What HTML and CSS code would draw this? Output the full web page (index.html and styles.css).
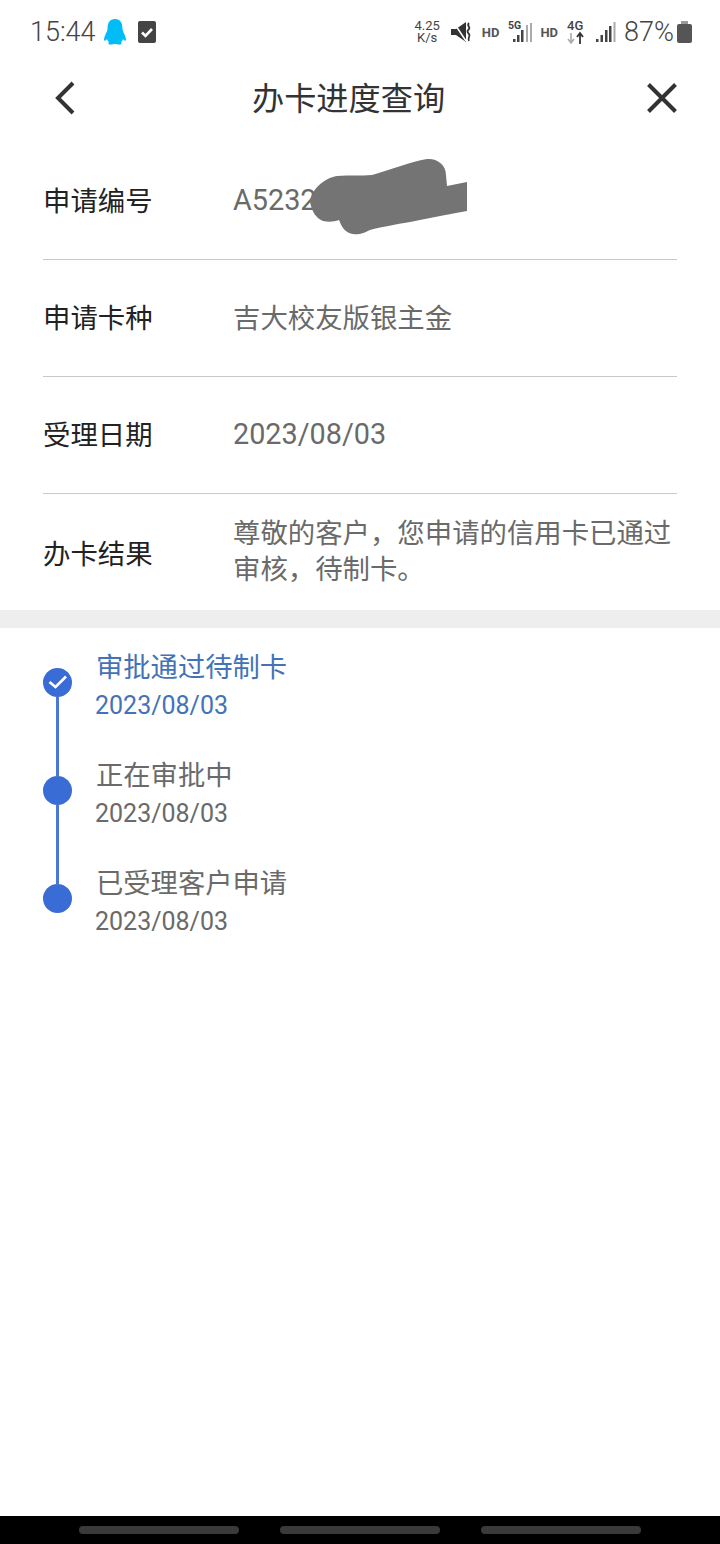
FILE: index.html
```html
<!DOCTYPE html>
<html lang="zh-CN">
<head>
    <meta charset="UTF-8">
    <meta name="viewport" content="width=device-width, initial-scale=1.0">
    <title>办卡进度查询</title>
    <link rel="stylesheet" href="styles.css">
</head>
<body>
    <div class="page">
        <div class="status-bar">
            <div class="status-left">
                <span class="clock">15:44</span>
                <svg class="qq-icon" width="24" height="28" viewBox="0 0 24 28">
                    <path fill="#00bdf7" d="M12 1C6.800 1 4.600 5 4.600 9.500c0 1.400-.1 2.500-.6 3.700C2.800 15.700 1 18.800 1 22c.5 1.500 2 .5 3-1 .3 1.300 1 2.400 2 3.300C5 25 5 26.500 7.500 26.500c1.900 0 3.300-.6 4.500-.6s2.600.6 4.500.6c2.500 0 2.500-1.500 1.500-2.200 1-.9 1.700-2 2-3.300 1 1.500 2.500 2.500 3 1 0-3.200-1.800-6.300-3-8.800-.5-1.200-.6-2.300-.6-3.700C19.400 5 17.200 1 12 1z"/>
                </svg>
                <svg class="task-icon" width="18" height="22" viewBox="0 0 18 22">
                    <rect width="18" height="22" rx="2" fill="#444"/>
                    <path d="M4 11.500l3.500 3.500 6.500-7" fill="none" stroke="#fff" stroke-width="2.600"/>
                </svg>
            </div>
            <div class="status-right">
                <span class="speed">4.25<br>K/s</span>
                <svg class="mute-icon" width="21" height="22" viewBox="0 0 21 22">
                    <path fill="#333" d="M0 8h5L15 1v20L5 14H0z"/>
                    <path d="M3 2l12 18" stroke="#fff" stroke-width="1.500"/>
                    <path d="M18 2c-3 3 2 4 0 6s-2 3 0 5-2 4 0 7" fill="none" stroke="#333" stroke-width="1.800"/>
                </svg>
                <span class="hd hd-first">HD</span>
                <svg class="signal-icon" width="25" height="24" viewBox="0 0 25 24">
                    <text x="0" y="9" class="net-label">5G</text>
                    <rect x="5" y="19" width="2.500" height="3" fill="#444"/>
                    <rect x="9" y="15" width="2.500" height="7" fill="#444"/>
                    <rect x="13" y="10" width="2.500" height="12" fill="#444"/>
                    <rect x="18" y="5" width="2" height="17" fill="#aaa"/>
                    <rect x="22" y="3" width="2" height="19" fill="#aaa"/>
                </svg>
                <span class="hd hd-second">HD</span>
                <svg class="net-icon" width="19" height="26" viewBox="0 0 19 26">
                    <text x="0" y="11" class="net-label net-label-big">4G</text>
                    <path d="M4 14v10M1 20l3 4 3-4" fill="none" stroke="#aaa" stroke-width="1.600"/>
                    <path d="M13 25V15M10 18l3-4 3 4" fill="none" stroke="#333" stroke-width="1.800"/>
                </svg>
                <svg class="bars-icon" width="20" height="22" viewBox="0 0 20 22">
                    <rect x="0" y="18" width="2.500" height="3" fill="#444"/>
                    <rect x="4.500" y="14" width="2.500" height="7" fill="#444"/>
                    <rect x="9" y="9" width="2.500" height="12" fill="#444"/>
                    <rect x="13" y="5" width="2.500" height="16" fill="#444"/>
                    <rect x="17.500" y="1" width="2" height="20" fill="#aaa"/>
                </svg>
                <span class="battery-text">87%</span>
                <svg class="battery-icon" width="15" height="22" viewBox="0 0 15 22">
                    <path fill="#9a9a9a" d="M4 0h7v3H4z"/>
                    <rect y="3" width="15" height="19" rx="2" fill="#555"/>
                </svg>
            </div>
        </div>

        <div class="nav-bar">
            <svg class="nav-icon" width="26" height="36" viewBox="0 0 26 36">
                <path d="M22 3L7 18l15 15" fill="none" stroke="#333" stroke-width="4"/>
            </svg>
            <h1 class="nav-title">办卡进度查询</h1>
            <svg class="nav-icon" width="32" height="32" viewBox="0 0 32 32">
                <path d="M2.500 2.500l27 27M29.500 2.500l-27 27" fill="none" stroke="#333" stroke-width="4"/>
            </svg>
        </div>

        <div class="info-list">
            <div class="info-row">
                <span class="info-label">申请编号</span>
                <span class="info-value info-number">A5232</span>
                <svg class="scribble" width="170" height="90" viewBox="0 0 170 90">
                    <path fill="#747474" d="M10 52C11 40 24 28 37 26C50 25 60 26 72 25C90 20 110 12 127 9C136 8 146 14 146 25L147 36L167 32V61C150 64 135 67 120 70C100 74 85 76 70 80C62 84 58 85 53 84C46 83 42 78 39 70C34 72 28 72 23 71C16 68 12 62 10 52z"/>
                </svg>
            </div>
            <div class="info-row">
                <span class="info-label">申请卡种</span>
                <span class="info-value">吉大校友版银主金</span>
            </div>
            <div class="info-row">
                <span class="info-label">受理日期</span>
                <span class="info-value info-number">2023/08/03</span>
            </div>
            <div class="info-row info-row-last">
                <span class="info-label">办卡结果</span>
                <span class="info-value info-multi">尊敬的客户，您申请的信用卡已通过审核，待制卡。</span>
            </div>
        </div>

        <div class="band"></div>

        <div class="timeline">
            <div class="step step-active">
                <div class="step-mark">
                    <span class="dot">
                        <svg width="29" height="29" viewBox="0 0 29 29">
                            <path d="M6.500 14l6 5L23 8.500" fill="none" stroke="#fff" stroke-width="2.600"/>
                        </svg>
                    </span>
                    <span class="line"></span>
                </div>
                <div class="step-text">
                    <div class="step-title">审批通过待制卡</div>
                    <div class="step-date">2023/08/03</div>
                </div>
            </div>
            <div class="step">
                <div class="step-mark">
                    <span class="dot"></span>
                    <span class="line"></span>
                </div>
                <div class="step-text">
                    <div class="step-title">正在审批中</div>
                    <div class="step-date">2023/08/03</div>
                </div>
            </div>
            <div class="step">
                <div class="step-mark">
                    <span class="dot"></span>
                </div>
                <div class="step-text">
                    <div class="step-title">已受理客户申请</div>
                    <div class="step-date">2023/08/03</div>
                </div>
            </div>
        </div>

        <div class="nav-keys">
            <span class="key"></span>
            <span class="key"></span>
            <span class="key"></span>
        </div>
    </div>
</body>
</html>
```

FILE: styles.css
```css
body {
    margin: 0;
    background-color: #ffffff;
    font-family: Roboto, "Noto Sans CJK SC", sans-serif;
}
.page {
    width: 720px;
    height: 1544px;
    display: flex;
    flex-direction: column;
    overflow: hidden;
}

/* status bar */
.status-bar {
    height: 64px;
    display: flex;
    justify-content: space-between;
    align-items: center;
    padding: 0 28px 0 30px;
    color: #444;
}
.status-left, .status-right {
    display: flex;
    align-items: center;
}
.clock {
    font-size: 27px;
    font-weight: 300;
    color: #444;
}
.qq-icon {
    margin-left: 7px;
}
.task-icon {
    margin-left: 11px;
}
.speed {
    font-size: 13px;
    line-height: 12px;
    text-align: center;
    color: #444;
}
.mute-icon {
    margin-left: 11px;
}
.hd {
    font-size: 13px;
    font-weight: 700;
    color: #555;
}
.hd-first {
    margin-left: 10px;
}
.signal-icon {
    margin-left: 9px;
}
.hd-second {
    margin-left: 7px;
}
.net-icon {
    margin-left: 9px;
}
.net-label {
    font-size: 10.5px;
    font-weight: 700;
    fill: #444;
}
.net-label-big {
    font-size: 13px;
    font-weight: 500;
}
.bars-icon {
    margin-left: 10px;
}
.battery-text {
    margin-left: 8px;
    font-size: 27px;
    font-weight: 300;
    color: #444;
}
.battery-icon {
    margin-left: 3px;
}

/* title row */
.nav-bar {
    height: 68px;
    display: flex;
    align-items: center;
    padding: 0 42px 0 51px;
}
.nav-title {
    flex: 1;
    margin: 0;
    padding: 0 0 4px 175px;
    font-size: 32.2px;
    font-weight: 400;
    color: #333;
}

/* details */
.info-list {
    margin: 11px 43px 0;
}
.info-row {
    position: relative;
    height: 112px;
    padding-bottom: 4px;
    border-bottom: 1px solid #c9c9c9;
    display: flex;
    align-items: center;
}
.info-row-last {
    height: 116px;
    padding-bottom: 0;
    border-bottom: none;
}
.info-label {
    width: 190px;
    flex-shrink: 0;
    font-size: 27.4px;
    color: #222;
}
.info-value {
    font-size: 27.4px;
    color: #6a6a6a;
}
.info-number {
    margin-top: 2px;
    font-size: 28.8px;
}
.info-multi {
    line-height: 36px;
}
.scribble {
    position: absolute;
    left: 257px;
    top: 7px;
}
.band {
    height: 18px;
    background-color: #eeeeee;
}

/* timeline */
.timeline {
    flex: 1;
    padding: 22px 0 0 43px;
}
.step {
    height: 108px;
    display: flex;
}
.step-mark {
    width: 29px;
    padding-top: 18px;
    display: flex;
    flex-direction: column;
    align-items: center;
}
.dot {
    width: 29px;
    height: 29px;
    flex-shrink: 0;
    border-radius: 50%;
    background-color: #3a6cd6;
}
.dot svg {
    display: block;
}
.line {
    flex: 1;
    width: 2.5px;
    margin-bottom: -18px;
    background-color: #4a77cf;
}
.step-text {
    margin-left: 24px;
    color: #6a6a6a;
}
.step-title {
    font-size: 27.3px;
    line-height: 36px;
}
.step-date {
    margin-top: 2px;
    margin-left: -1px;
    font-size: 25px;
    line-height: 36px;
}
.step-active .step-text {
    color: #4472b8;
}

/* gesture bar */
.nav-keys {
    height: 28px;
    background-color: #000000;
    display: flex;
    justify-content: center;
    align-items: center;
    gap: 41px;
}
.key {
    width: 160px;
    height: 8px;
    border-radius: 4px;
    background-color: #3a3a3a;
}
```
